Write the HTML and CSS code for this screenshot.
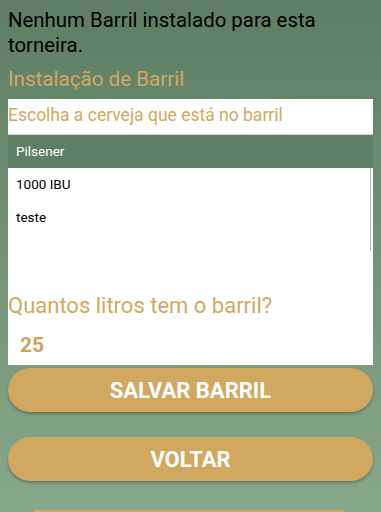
FILE: index.html
```html
<!DOCTYPE html>
<html lang="pt">
<head>
  <meta charset="UTF-8">
  <meta name="viewport" content="width=device-width, initial-scale=1.0">
  <title>Instalação de Barril</title>
  <link rel="stylesheet" href="styles.css">
</head>
<body>
  <div class="screen">
    <p class="status">Nenhum Barril instalado para esta torneira.</p>
    <h2 class="title">Instalação de Barril</h2>
    <div class="panel">
      <div class="prompt">Escolha a cerveja que está no barril</div>
      <div class="beer-list">
        <div class="beer selected">Pilsener</div>
        <div class="beer">1000 IBU</div>
        <div class="beer">teste</div>
        <div class="beer"></div>
        <span class="scroll"></span>
      </div>
      <div class="question">Quantos litros tem o barril?</div>
      <div class="liters">25</div>
    </div>
    <button class="btn">SALVAR BARRIL</button>
    <button class="btn">VOLTAR</button>
    <div class="peek"></div>
  </div>
</body>
</html>
```
FILE: styles.css
```css
html, body {
  margin: 0;
  padding: 0;
  height: 100%;
}
body {
  font-family: Roboto, "Noto Sans", sans-serif;
  background: linear-gradient(180deg, #5e7e63, #88a88c);
  overflow: hidden;
}
.screen {
  padding: 8px 8px 0 8px;
  display: flex;
  flex-direction: column;
}
.status {
  margin: 0;
  font-size: 20.4px;
  line-height: 25px;
  color: #000;
}
.title {
  margin: 9px 0 0 0;
  font-size: 20.6px;
  font-weight: normal;
  line-height: 25px;
  color: #d2a862;
}
.panel {
  margin-top: 7px;
  background: #fff;
  height: 266px;
}
.prompt {
  height: 35px;
  line-height: 33px;
  font-size: 17.5px;
  color: #d2a862;
  border-bottom: 1px solid #d8d8d8;
}
.beer-list {
  position: relative;
  height: 150px;
  overflow: hidden;
}
.beer {
  height: 33px;
  line-height: 33px;
  padding-left: 8px;
  font-size: 13.5px;
  color: #000;
}
.beer.selected {
  background: #5e7f63;
  color: #fff;
}
.scroll {
  position: absolute;
  right: 2px;
  top: 33px;
  width: 1px;
  height: 83px;
  background: #bdbdbd;
}
.question {
  margin-top: 8px;
  font-size: 22px;
  line-height: 26px;
  color: #d2a862;
}
.liters {
  margin-top: 14px;
  padding-left: 12px;
  font-size: 21px;
  line-height: 24px;
  font-weight: bold;
  color: #cfa45c;
}
.btn {
  margin-top: 3px;
  height: 44px;
  border: none;
  border-radius: 22px;
  background: #d0a860;
  color: #fff;
  font-family: Roboto, "Noto Sans", sans-serif;
  font-size: 22px;
  font-weight: bold;
  box-shadow: 0 2px 3px rgba(0, 0, 0, 0.25);
}
.btn + .btn {
  margin-top: 25px;
}
.peek {
  margin: 29px 28px 0 25px;
  height: 6px;
  border-radius: 3px 3px 0 0;
  background: #d0a860;
}
```
